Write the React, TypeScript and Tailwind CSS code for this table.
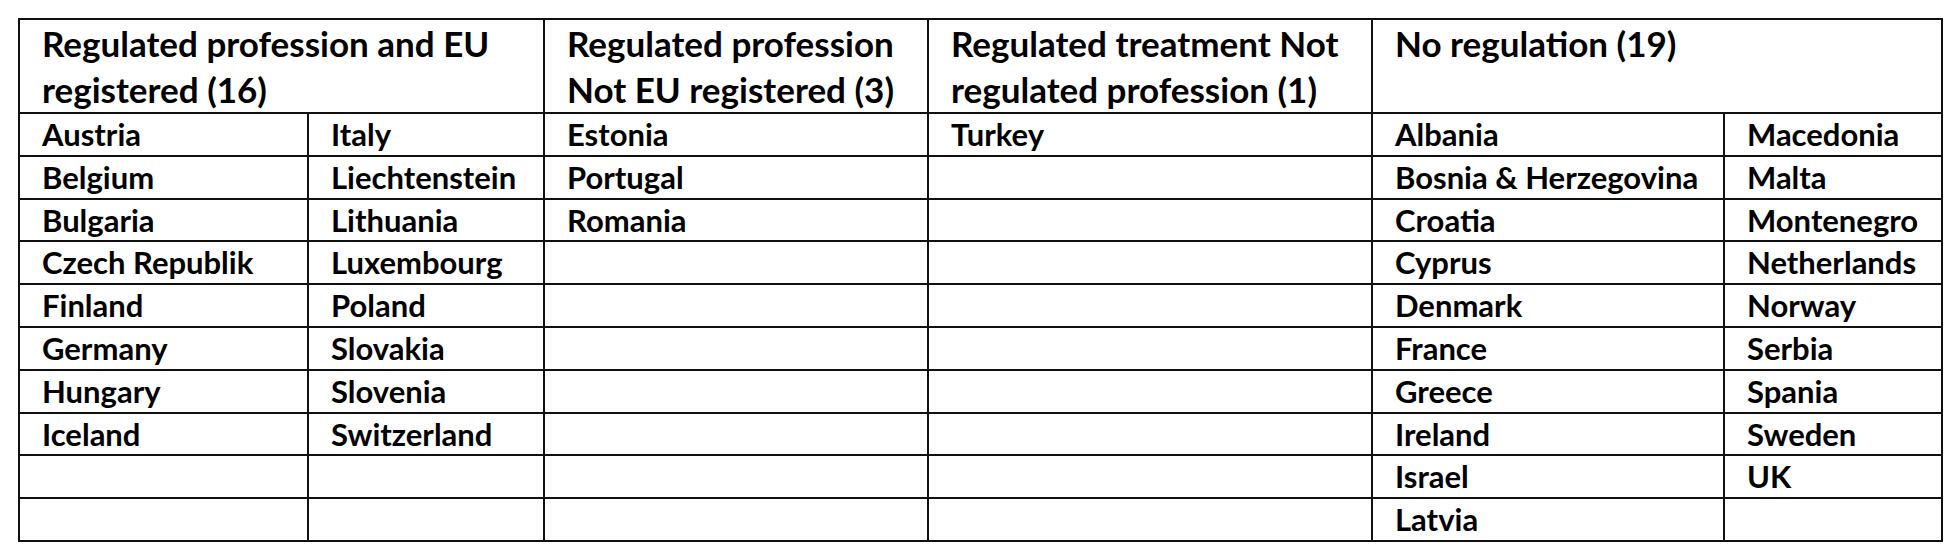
import React from 'react';

const col1 = ['Austria', 'Belgium', 'Bulgaria', 'Czech Republik', 'Finland', 'Germany', 'Hungary', 'Iceland', '', ''];
const col2 = ['Italy', 'Liechtenstein', 'Lithuania', 'Luxembourg', 'Poland', 'Slovakia', 'Slovenia', 'Switzerland', '', ''];
const col3 = ['Estonia', 'Portugal', 'Romania', '', '', '', '', '', '', ''];
const col4 = ['Turkey', '', '', '', '', '', '', '', '', ''];
const col5 = ['Albania', 'Bosnia & Herzegovina', 'Croatia', 'Cyprus', 'Denmark', 'France', 'Greece', 'Ireland', 'Israel', 'Latvia'];
const col6 = ['Macedonia', 'Malta', 'Montenegro', 'Netherlands', 'Norway', 'Serbia', 'Spania', 'Sweden', 'UK', ''];

const cell = 'border-2 border-[#111] pl-[22px] pr-2 align-top whitespace-nowrap';

const App: React.FC = () => {
  return (
    <div className="w-[1958px] h-[552px] bg-white pt-[18px] pl-[18px] font-['Lato',_'Open_Sans',_sans-serif] font-bold text-black">
      <table className="table-fixed border-collapse w-[1925px]">
        <colgroup>
          <col className="w-[289px]" />
          <col className="w-[236px]" />
          <col className="w-[384px]" />
          <col className="w-[444px]" />
          <col className="w-[352px]" />
          <col className="w-[218px]" />
        </colgroup>
        <thead>
          <tr className="h-[94px] text-[35px] leading-[46px]">
            <th colSpan={2} className={`${cell} text-left font-bold`}>
              Regulated profession and EU
              <br />
              registered (16)
            </th>
            <th className={`${cell} text-left font-bold`}>
              Regulated profession
              <br />
              Not EU registered (3)
            </th>
            <th className={`${cell} text-left font-bold`}>
              Regulated treatment Not
              <br />
              regulated profession (1)
            </th>
            <th colSpan={2} className={`${cell} text-left font-bold`}>
              No regulation (19)
            </th>
          </tr>
        </thead>
        <tbody>
          {col1.map((_, i) => (
            <tr key={i} className="h-[42.8px] text-[31px] leading-[40px]">
              <td className={cell}>{col1[i]}</td>
              <td className={cell}>{col2[i]}</td>
              <td className={cell}>{col3[i]}</td>
              <td className={cell}>{col4[i]}</td>
              <td className={cell}>{col5[i]}</td>
              <td className={cell}>{col6[i]}</td>
            </tr>
          ))}
        </tbody>
      </table>
    </div>
  );
};

export default App;
